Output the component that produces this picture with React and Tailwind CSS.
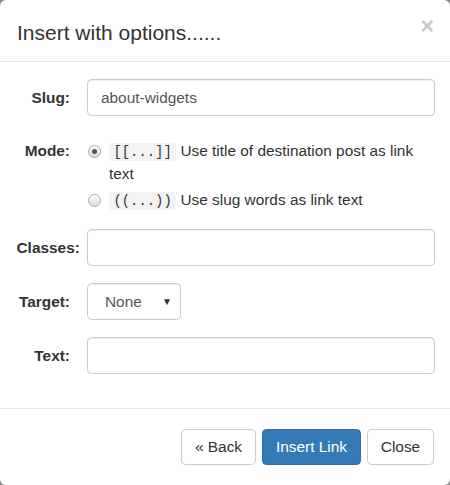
import React, { useState } from 'react';

const font = { fontFamily: '"Liberation Sans", Arial, sans-serif' };

const Radio = ({ checked }) => (
  <span className="mt-[5px] ml-[1px] flex h-[13px] w-[13px] shrink-0 items-center justify-center rounded-full border border-[#a9a9a9] bg-gradient-to-b from-white to-[#dcdcdc]">
    {checked && <span className="h-[5px] w-[5px] rounded-full bg-[#555]" />}
  </span>
);

const Code = ({ children }) => (
  <code className="rounded-[4px] bg-[#f3f3f3] px-[4.4px] py-[1px] font-['Liberation_Mono',monospace] text-[13.9px] text-[#333]">
    {children}
  </code>
);

const Label = ({ children, className = '' }) => (
  <label className={`w-[53.5px] shrink-0 whitespace-nowrap text-right font-bold ${className}`}>{children}</label>
);

export default function App() {
  const [mode, setMode] = useState('title');
  const [slug, setSlug] = useState('about-widgets');

  const inputCls =
    'h-[37px] w-[348px] rounded-[4.4px] border border-[#ccc] bg-white px-[13px] text-[15.4px] text-[#555] shadow-[inset_0_1px_1px_rgba(0,0,0,0.075)] outline-none';

  return (
    <div className="h-[485px] w-[450px] bg-[#8a8a8a]" style={font}>
      <div className="flex h-full w-full flex-col overflow-hidden rounded-[6px] bg-white text-[15.4px] leading-[22px] text-[#333]">
        {/* header */}
        <div className="flex h-[62px] shrink-0 items-start justify-between border-b border-[#e5e5e5] pl-[17px] pr-[16px] pt-[19px]">
          <h4 className="text-[21px] leading-[28px]">Insert with options......</h4>
          <button className="-mt-[7px] text-[23px] font-bold leading-[28px] text-[#c8c8c8]">×</button>
        </div>

        {/* body */}
        <div className="flex flex-col pb-[34px] pl-[16.5px] pt-[17px]">
          <div className="mb-[17px] flex items-start gap-[17px]">
            <Label className="leading-[37px]">Slug:</Label>
            <input className={inputCls} value={slug} onChange={(e) => setSlug(e.target.value)} />
          </div>

          <div className="mb-[17px] flex items-start gap-[17px]">
            <Label className="pt-[7px]">Mode:</Label>
            <div className="w-[348px]">
              <div className="flex gap-[8px] pt-[7px]" onClick={() => setMode('title')}>
                <Radio checked={mode === 'title'} />
                <span>
                  <Code>[[...]]</Code> Use title of destination post as link text
                </span>
              </div>
              <div className="flex gap-[8px] pt-[4px]" onClick={() => setMode('slug')}>
                <Radio checked={mode === 'slug'} />
                <span>
                  <Code>((...))</Code> Use slug words as link text
                </span>
              </div>
            </div>
          </div>

          <div className="mb-[17px] flex items-start gap-[17px]">
            <Label className="leading-[37px]">Classes:</Label>
            <input className={inputCls} />
          </div>

          <div className="mb-[17px] flex items-start gap-[17px]">
            <Label className="leading-[37px]">Target:</Label>
            <div className="flex h-[37px] w-[94px] items-center justify-between rounded-[4.4px] border border-[#ccc] bg-white pl-[17px] pr-[8px] text-[#555] shadow-[inset_0_1px_1px_rgba(0,0,0,0.075)]">
              <span>None</span>
              <span className="text-[10px] text-[#333]">▼</span>
            </div>
          </div>

          <div className="flex items-start gap-[17px]">
            <Label className="leading-[37px]">Text:</Label>
            <input className={inputCls} />
          </div>
        </div>

        {/* footer */}
        <div className="flex justify-end gap-[6px] border-t border-[#e5e5e5] pr-[16px] pt-[20px]">
          <button className="h-[36px] w-[75px] rounded-[4.4px] border border-[#ccc] bg-white text-[#333]">« Back</button>
          <button className="h-[36px] w-[99px] rounded-[4.4px] border border-[#2e6da4] bg-[#337ab7] text-white">Insert Link</button>
          <button className="h-[36px] w-[67px] rounded-[4.4px] border border-[#ccc] bg-white text-[#333]">Close</button>
        </div>
      </div>
    </div>
  );
}
